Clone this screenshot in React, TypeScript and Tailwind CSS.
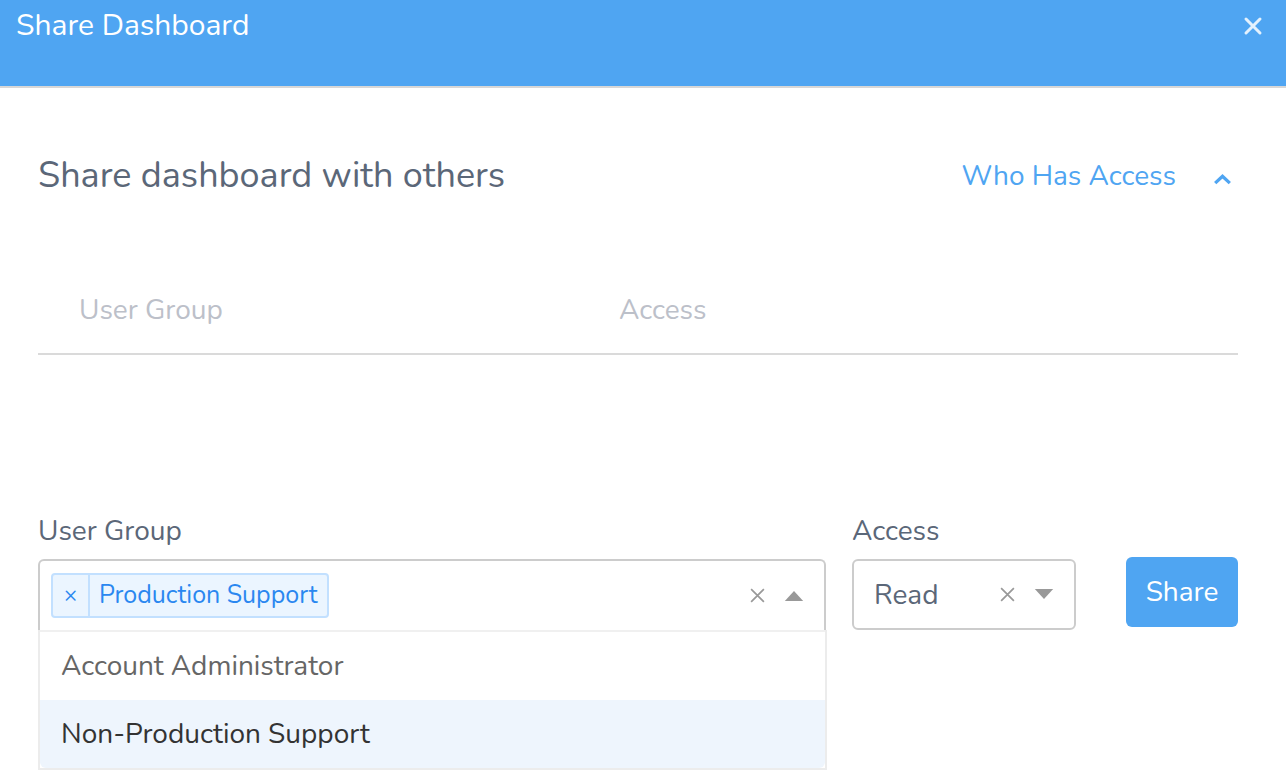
import React from "react";

const FONT = { fontFamily: '"Nunito", "Open Sans", Lato, sans-serif' };

function CloseIcon({ className }: { className?: string }) {
  return (
    <svg viewBox="0 0 20 20" className={className} fill="none" stroke="currentColor" strokeWidth={3} strokeLinecap="round">
      <path d="M3 3l14 14M17 3L3 17" />
    </svg>
  );
}

function ClearIcon() {
  return (
    <svg viewBox="0 0 16 16" className="h-[17px] w-[17px] text-[#999]" fill="none" stroke="currentColor" strokeWidth={1.6}>
      <path d="M2 2l12 12M14 2L2 14" />
    </svg>
  );
}

function Caret({ up }: { up?: boolean }) {
  return (
    <svg viewBox="0 0 20 12" className="h-[11px] w-[20px] text-[#999]" fill="currentColor">
      {up ? <path d="M0 12L10 1l10 11z" /> : <path d="M0 0l10 11L20 0z" />}
    </svg>
  );
}

export default function App() {
  return (
    <div className="min-h-[784px] w-full bg-white" style={FONT}>
      <header className="flex h-[88px] items-start justify-between border-b-2 border-[#d7d7d7] bg-[#4fa5f2] pl-4 pr-[23px] pt-[7px]">
        <h1 className="text-[30px] leading-[38px] text-white">Share Dashboard</h1>
        <button className="mt-[9px] text-[#e3f1fd]">
          <CloseIcon className="h-[20px] w-[20px]" />
        </button>
      </header>

      <main className="pl-[38px] pr-[48px]">
        <div className="flex items-center justify-between pt-[66px]">
          <h2 className="text-[36px] leading-[44px] text-[#5b6778]">Share dashboard with others</h2>
          <button className="flex items-center gap-[37px] pr-[6px] text-[28px] text-[#4fa5f2]">
            Who Has Access
            <svg viewBox="0 0 20 12" className="mt-[6px] h-[11px] w-[19px]" fill="none" stroke="currentColor" strokeWidth={3.6}>
              <path d="M2 10l8-7.5 8 7.5" />
            </svg>
          </button>
        </div>

        <div className="mt-[94px] grid grid-cols-[540px_1fr] border-b-2 border-[#dadada] pb-[25px] pl-[41px] text-[28px] leading-[36px] text-[#bcc0c9]">
          <span>User Group</span>
          <span>Access</span>
        </div>

        <div className="mt-[158px] flex items-end gap-[26px]">
          <div className="relative w-[788px]">
            <label className="block text-[28px] leading-[36px] text-[#5b6778]">User Group</label>
            <div className="mt-[10px] flex h-[71px] items-center rounded-t-[6px] border-2 border-b-0 border-[#cccccc] pl-[11px] pr-[20px]">
              <div className="flex h-[45px] items-stretch rounded-[4px] border-2 border-[#c2e0ff] bg-[#ebf5ff] text-[#2a87f0]">
                <span className="flex w-[37px] items-center justify-center border-r-2 border-[#c2e0ff] text-[22px]">×</span>
                <span className="flex items-center px-[9px] text-[25px]">Production Support</span>
              </div>
              <div className="ml-auto flex items-center gap-[18px]">
                <ClearIcon />
                <Caret up />
              </div>
            </div>
            <div className="absolute left-0 top-full w-[789px] border-2 border-t-0 border-[#ececec] bg-white">
              <div className="border-t-2 border-[#f0f0f0]" />
              <div className="flex h-[68px] items-center px-[21px] text-[28px] text-[#666]">Account Administrator</div>
              <div className="flex h-[68px] items-center rounded-b-[6px] bg-[#eef5fd] px-[21px] text-[28px] text-[#333]">Non-Production Support</div>
            </div>
          </div>

          <div className="w-[224px]">
            <label className="block text-[28px] leading-[36px] text-[#5b6778]">Access</label>
            <div className="mt-[10px] flex h-[71px] items-center rounded-[6px] border-2 border-[#cccccc] pl-[20px] pr-[20px]">
              <span className="text-[28px] text-[#5b6778]">Read</span>
              <div className="ml-auto flex items-center gap-[18px]">
                <ClearIcon />
                <Caret />
              </div>
            </div>
          </div>

          <button className="mb-[3px] ml-[24px] h-[70px] w-[112px] rounded-[6px] bg-[#4fa5f2] text-[28px] text-white">Share</button>
        </div>
      </main>
    </div>
  );
}
